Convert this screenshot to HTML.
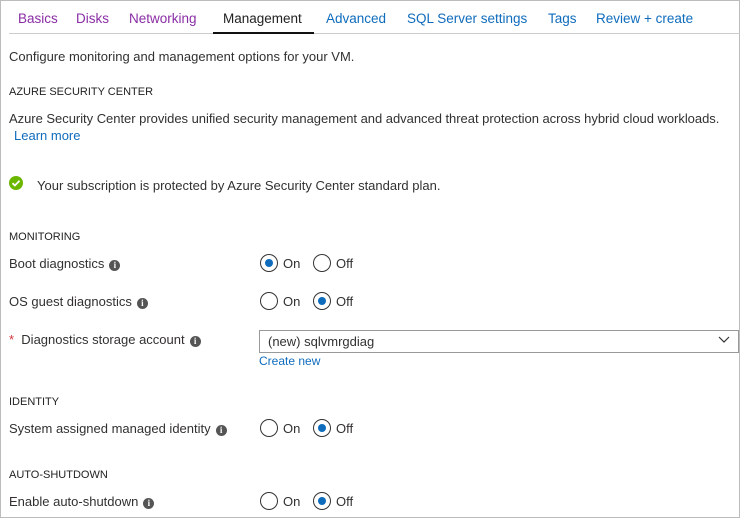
<!DOCTYPE html>
<html><head><style>
*{margin:0;padding:0;box-sizing:border-box}
body{width:740px;height:518px;background:#fff;font-family:"Liberation Sans",sans-serif;font-size:13px;color:#323130;position:relative;overflow:hidden}
.frame{position:absolute;left:0;top:0;width:740px;height:518px;border:1px solid #bcbcbc}
.a{position:absolute;white-space:nowrap}
.tab{position:absolute;top:11px;font-size:13.5px}
.v{color:#8a2da5}.b{color:#0f6cbd}
.h{font-size:11px;color:#222}
.info{display:inline-block;width:11px;height:11px;border-radius:50%;background:#555;color:#fff;font-size:9px;font-weight:bold;text-align:center;line-height:11px;vertical-align:0;margin-left:5px;font-family:"Liberation Serif",serif}
.r{position:absolute;width:18px;height:18px;border-radius:50%;border:1px solid #333;background:#fff}
.r.on::after{content:"";position:absolute;left:4px;top:4px;width:8px;height:8px;border-radius:50%;background:#0f6cbd}
</style></head><body>
<div class="frame"></div>
<div class="tab v" style="left:18px">Basics</div>
<div class="tab v" style="left:76px">Disks</div>
<div class="tab v" style="left:129px">Networking</div>
<div class="tab" style="left:223px;color:#222">Management</div>
<div class="tab b" style="left:326px">Advanced</div>
<div class="tab b" style="left:407px">SQL Server settings</div>
<div class="tab b" style="left:548px">Tags</div>
<div class="tab b" style="left:596px">Review + create</div>
<div class="a" style="left:9px;top:33px;width:731px;height:1px;background:#ccc"></div>
<div class="a" style="left:213px;top:32px;width:101px;height:2px;background:#111"></div>

<div class="a" style="left:9px;top:49px">Configure monitoring and management options for your VM.</div>
<div class="a h" style="left:9px;top:86px">AZURE SECURITY CENTER</div>
<div class="a" style="left:9px;top:111px;letter-spacing:-0.03px">Azure Security Center provides unified security management and advanced threat protection across hybrid cloud workloads.</div>
<div class="a b" style="left:14px;top:128px">Learn more</div>
<svg class="a" style="left:9px;top:176px" width="14" height="14"><circle cx="7" cy="7" r="7" fill="#6bb700"/><path d="M3.5 7.2l2.4 2.3 4.6-4.7" stroke="#fff" stroke-width="1.8" fill="none"/></svg>
<div class="a" style="left:37px;top:178px">Your subscription is protected by Azure Security Center standard plan.</div>

<div class="a h" style="left:9px;top:231px">MONITORING</div>
<div class="a" style="left:9px;top:256px">Boot diagnostics<span class="info">i</span></div>
<div class="r on" style="left:260px;top:254px"></div><div class="a" style="left:283px;top:256px">On</div>
<div class="r" style="left:313px;top:254px"></div><div class="a" style="left:336px;top:256px">Off</div>
<div class="a" style="left:9px;top:294px">OS guest diagnostics<span class="info">i</span></div>
<div class="r" style="left:260px;top:292px"></div><div class="a" style="left:283px;top:294px">On</div>
<div class="r on" style="left:313px;top:292px"></div><div class="a" style="left:336px;top:294px">Off</div>
<div class="a" style="left:9px;top:332px"><span style="color:#d13438">*</span>&nbsp; Diagnostics storage account<span class="info">i</span></div>
<div class="a" style="left:259px;top:330px;width:480px;height:23px;border:1px solid #999"></div>
<div class="a" style="left:268px;top:334px">(new) sqlvmrgdiag</div>
<svg class="a" style="left:718px;top:336px" width="12" height="8"><path d="M1 1l5 5 5-5" stroke="#333" stroke-width="1.2" fill="none"/></svg>
<div class="a b" style="left:259px;top:354px;font-size:12px">Create new</div>

<div class="a h" style="left:9px;top:396px">IDENTITY</div>
<div class="a" style="left:9px;top:421px">System assigned managed identity<span class="info">i</span></div>
<div class="r" style="left:260px;top:419px"></div><div class="a" style="left:283px;top:421px">On</div>
<div class="r on" style="left:313px;top:419px"></div><div class="a" style="left:336px;top:421px">Off</div>
<div class="a h" style="left:9px;top:469px">AUTO-SHUTDOWN</div>
<div class="a" style="left:9px;top:494px">Enable auto-shutdown<span class="info">i</span></div>
<div class="r" style="left:260px;top:492px"></div><div class="a" style="left:283px;top:494px">On</div>
<div class="r on" style="left:313px;top:492px"></div><div class="a" style="left:336px;top:494px">Off</div>
</body></html>
